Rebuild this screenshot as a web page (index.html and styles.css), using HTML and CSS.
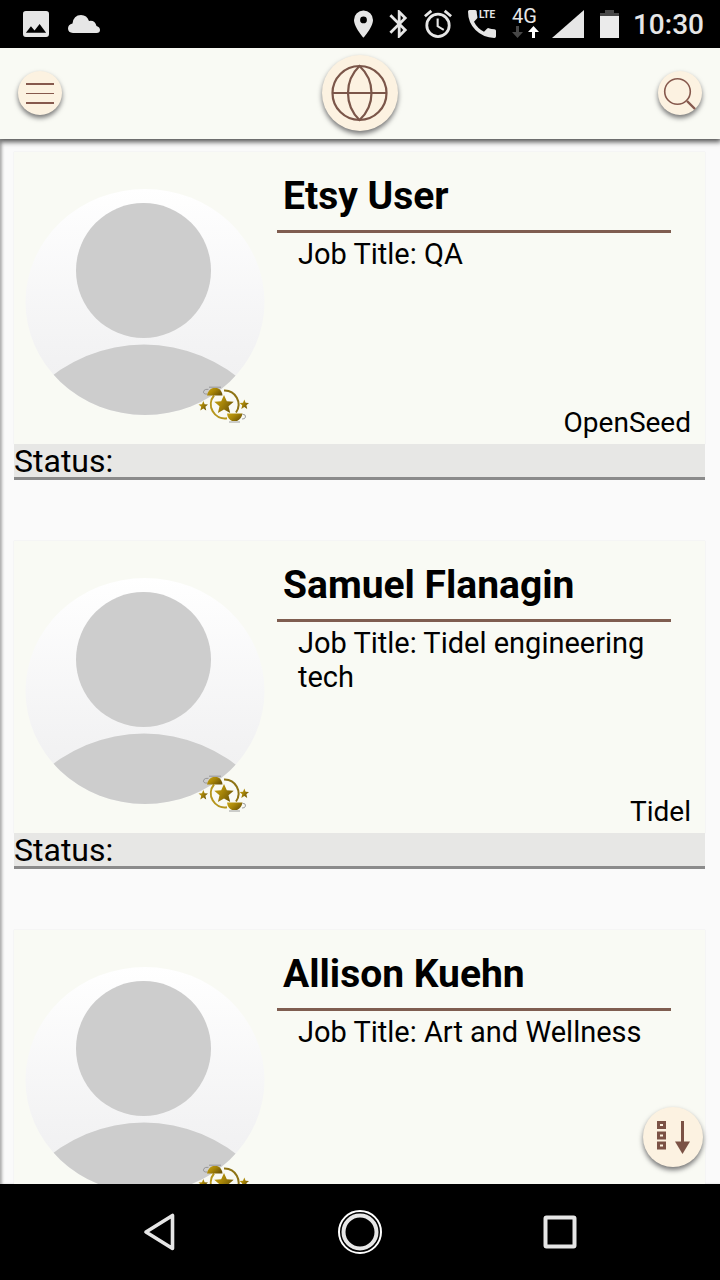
FILE: index.html
```html
<!DOCTYPE html>
<html lang="en">
<head>
<meta charset="utf-8">
<meta name="viewport" content="width=device-width, initial-scale=1">
<title>Contacts</title>
<link rel="stylesheet" href="styles.css">
</head>
<body>
<svg class="defs" aria-hidden="true">
  <defs>
    <linearGradient id="disc" x1="0" y1="0" x2="0" y2="1">
      <stop offset="0" stop-color="#ffffff"/>
      <stop offset="0.75" stop-color="#f2f2f3"/>
      <stop offset="1" stop-color="#f0f0f0"/>
    </linearGradient>
    <linearGradient id="gold" x1="0" y1="0" x2="1" y2="0.6">
      <stop offset="0" stop-color="#c9a514"/>
      <stop offset="0.5" stop-color="#a88608"/>
      <stop offset="1" stop-color="#705706"/>
    </linearGradient>
    <clipPath id="oval"><ellipse cx="131" cy="150" rx="119.500" ry="113"/></clipPath>
    <symbol id="person" viewBox="0 0 263 292">
      <ellipse cx="131" cy="150" rx="119.500" ry="113" fill="url(#disc)"/>
      <circle cx="129.500" cy="118.500" r="67.500" fill="#cdcdcd"/>
      <circle cx="130" cy="343" r="150.500" fill="#cdcdcd" clip-path="url(#oval)"/>
      <path d="M200 243.500A14 14 0 0 0 213 266.200" fill="none" stroke="#b5961d" stroke-width="2"/>
      <path d="M210 238.500A14 14 0 0 1 222 260.500" fill="none" stroke="#8e7314" stroke-width="2"/>
      <g fill="url(#gold)">
        <path d="M210 243l2.800 6.200 6.900.6-5.200 4.500 1.700 6.800-6.200-3.600-6.100 3.600 1.600-6.800-5.300-4.500 7-.6z"/>
        <path d="M189.300 249l1.300 3.200 3.400.3-2.600 2.300.8 3.600-2.900-2-3 2 .9-3.600-2.700-2.300 3.500-.3z"/>
        <path d="M230.300 247.500l1.300 3.200 3.400.3-2.600 2.300.8 3.600-2.900-2-3 2 .9-3.600-2.700-2.300 3.500-.3z"/>
        <path d="M193 243.500q1-6 6-7.500h4q5 1.700 5.500 7.500z"/>
        <path d="M213 261.500h15.500q-1 5.500-5.500 7.500h-5q-4.500-2-5-7.500z"/>
      </g>
      <path d="M195 235.200h12M215 270h11M193 242h-1.500q-3-.5-1.500-3.500 1-1.500 4.500-1.200M228 267q3 .3 3.500-2 .5-2.800-3-2.700" fill="none" stroke="#88888a" stroke-width="0.800"/>
    </symbol>
  </defs>
</svg>

<div class="phone">
  <div class="statusbar">
    <div class="status-left">
      <svg width="26" height="26" viewBox="3 3 18 18"><path fill="#e6e6e6" d="M21 19V5a2 2 0 0 0-2-2H5a2 2 0 0 0-2 2v14a2 2 0 0 0 2 2h14a2 2 0 0 0 2-2zM8.500 13.500l2.500 3 3.500-4.500 4.500 6H5l3.500-4.500z"/></svg>
      <svg width="32" height="18" viewBox="0 0 32 18"><path fill="#e6e6e6" d="M5 18Q0 17.500 0 13.500 0 9.500 4.500 8.500 5.500 0 13 0q6 0 8 6 6-1 7.500 5 3.500 1 3.500 4 0 3-3.500 3z"/></svg>
    </div>
    <div class="status-right">
      <svg width="19" height="28" viewBox="5 2 14 20"><path fill="#e6e6e6" d="M12 2a7 7 0 0 0-7 7c0 5.250 7 13 7 13s7-7.750 7-13a7 7 0 0 0-7-7zm0 9.500a2.500 2.500 0 1 1 0-5 2.500 2.500 0 0 1 0 5z"/></svg>
      <svg width="19" height="28" viewBox="5 2 13 20"><path fill="#e6e6e6" d="M17.710 7.710L12 2h-1v7.590L6.410 5 5 6.410 10.590 12 5 17.590 6.410 19 11 14.410V22h1l5.710-5.710L13.410 12zM13 5.830l1.880 1.880L13 9.590zm1.880 10.460L13 18.170v-3.760z"/></svg>
      <svg width="28" height="28" viewBox="2 2 20 20"><path fill="#e6e6e6" d="M22 5.720l-4.600-3.860-1.290 1.530 4.600 3.860zM7.880 3.390L6.600 1.860 2 5.710l1.290 1.530zM12.500 8H11v6l4.750 2.850.75-1.230-4-2.370zM12 4a9 9 0 1 0 0 18 9 9 0 0 0 0-18zm0 16a7 7 0 1 1 0-14 7 7 0 0 1 0 14z"/></svg>
      <svg width="28" height="28" viewBox="0 0 28 28"><path fill="#e6e6e6" d="M1.500 0h5.800q1.300 0 1.400 1.500.1 3 .7 5.500.3.900-.4 1.600L6 11.800q3.200 6.500 10 10l3.200-3.200q.6-.7 1.500-.4 2.800.9 5.700 1 1.600.1 1.600 1.500v5.500q0 1.800-1.600 1.800Q15 27.500 7.500 20T0 1.500Q0 0 1.500 0z"/><text class="lte" x="11" y="8">LTE</text></svg>
      <svg width="28" height="28" viewBox="0 0 28 28"><text class="net" x="0" y="13">4G</text><path fill="#474747" d="M4 16h3v6h4l-5.500 6L0 22h4z"/><path fill="#ffffff" d="M20 28v-6h-4l5.500-6 5.500 6h-4v6z"/></svg>
      <svg class="signal" width="32" height="28" viewBox="0 0 32 28"><path fill="#e6e6e6" d="M0 28L32 0v28z"/></svg>
      <svg width="19" height="28" viewBox="0 0 19 28"><path fill="#474747" d="M5 0h9v3h5v3H0V3h5z"/><path fill="#ebebeb" d="M0 6h19v22H0z"/></svg>
      <span class="clock">10:30</span>
    </div>
  </div>

  <header class="topbar">
    <button class="round" aria-label="Menu"><svg width="44" height="44" viewBox="0 0 44 44"><path stroke="#86594d" stroke-width="2" d="M8 13h28M8 32h28"/><path stroke="#86594d" d="M8 22.500h28"/></svg></button>
    <button class="round" aria-label="World"><svg width="76" height="76" viewBox="0 0 76 76"><g fill="none" stroke="#7b5649" stroke-width="2.200"><circle cx="37.500" cy="38" r="27"/><path d="M10 38h55M37.500 11Q26 22 26 38t11.500 27Q49.500 54 49.500 38T37.500 11z"/></g></svg></button>
    <button class="round" aria-label="Search"><svg width="44" height="44" viewBox="0 0 44 44"><circle cx="19.500" cy="20.500" r="12.800" fill="none" stroke="#86594d" stroke-width="1.600"/><path d="M29 30l8 8" stroke="#86594d" stroke-width="2.400"/></svg></button>
  </header>

  <main class="content">
    <div class="list">
      <article class="card">
        <div class="card-body">
          <svg class="avatar" width="263" height="292"><use href="#person"/></svg>
          <div class="details">
            <h2>Etsy User</h2>
            <p class="job">Job Title: QA</p>
            <p class="company">OpenSeed</p>
          </div>
        </div>
        <p class="state">Status:</p>
      </article>
      <article class="card">
        <div class="card-body">
          <svg class="avatar" width="263" height="292"><use href="#person"/></svg>
          <div class="details">
            <h2>Samuel Flanagin</h2>
            <p class="job">Job Title: Tidel engineering tech</p>
            <p class="company">Tidel</p>
          </div>
        </div>
        <p class="state">Status:</p>
      </article>
      <article class="card">
        <div class="card-body">
          <svg class="avatar" width="263" height="292"><use href="#person"/></svg>
          <div class="details">
            <h2>Allison Kuehn</h2>
            <p class="job">Job Title: Art and Wellness</p>
          </div>
        </div>
      </article>
    </div>
    <button class="round sort" aria-label="Sort"><svg width="60" height="60" viewBox="0 0 60 60"><g fill="none" stroke="#7b5245" stroke-width="3"><path d="M15.500 15.500h6v5h-6zM15.500 26h6v5h-6zM15.500 36h6v5h-6zM39.500 14v22"/></g><path fill="#7b5245" d="M32 34.500h15L39.500 47z"/></svg></button>
  </main>

  <nav class="navbar">
    <button aria-label="Back"><svg width="44" height="44" viewBox="0 0 44 44"><path fill="none" stroke="#e6e6e6" stroke-width="3.600" stroke-linejoin="round" d="M8 22L34.500 5.500v33z"/></svg></button>
    <button aria-label="Home"><svg width="44" height="44" viewBox="0 0 44 44"><circle cx="22" cy="22" r="21" fill="none" stroke="#ffffff" stroke-width="2"/><circle cx="22" cy="22" r="16.500" fill="none" stroke="#e6e6e6" stroke-width="4"/></svg></button>
    <button aria-label="Recent apps"><svg width="44" height="44" viewBox="0 0 44 44"><rect x="7.500" y="7.500" width="29" height="29" rx="1" fill="none" stroke="#e6e6e6" stroke-width="4"/></svg></button>
  </nav>
</div>
</body>
</html>
```
FILE: styles.css
```css
* {
  box-sizing: border-box;
}

body {
  margin: 0;
  font-family: Roboto, "Liberation Sans", sans-serif;
  color: #000;
}

h2,
p {
  margin: 0;
}

svg {
  display: block;
  overflow: visible;
}

button {
  padding: 0;
  border: 0;
  background: none;
}

.defs {
  position: absolute;
  width: 0;
  height: 0;
}

.phone {
  display: flex;
  flex-direction: column;
  height: 100vh;
  overflow: hidden;
  background: #fafafa;
}

.statusbar {
  display: flex;
  justify-content: space-between;
  align-items: center;
  flex: none;
  height: 48px;
  padding: 0 16px 0 23px;
  background: #000;
}

.status-left {
  display: flex;
  align-items: center;
  gap: 19px;
}

.status-right {
  display: flex;
  align-items: center;
  gap: 16px;
}

.signal {
  margin-left: -4px;
}

.clock {
  margin-left: -2px;
  padding-top: 2px;
  color: #e6e6e6;
  font-size: 28px;
  font-weight: 500;
  line-height: 50px;
}

.lte {
  font-size: 10px;
  font-weight: 700;
  fill: #e6e6e6;
}

.net {
  font-size: 20px;
  font-weight: 400;
  fill: #e6e6e6;
}

.topbar {
  position: relative;
  z-index: 1;
  display: flex;
  justify-content: space-between;
  align-items: center;
  flex: none;
  height: 91px;
  padding: 0 18px 1px;
  background: #f9faf4;
  box-shadow: 0 2px 5px 1px #555;
  clip-path: inset(0 0 -12px 0);
}

.round {
  border-radius: 50%;
  background: #fcf2e1;
  box-shadow: 0 3px 5px #777;
}

.content {
  position: relative;
  flex: 1;
  min-height: 0;
  overflow: hidden;
  box-shadow: inset 3px 0 3px -1px #aaa;
}

.list {
  display: flex;
  flex-direction: column;
  gap: 61px;
  padding: 13px 15px 0 14px;
}

.card-body {
  display: flex;
  height: 292px;
  background: #f9faf4;
  box-shadow: 0 0 1px #ddd;
}

.avatar {
  flex: none;
}

.details {
  display: flex;
  flex: 1;
  flex-direction: column;
  padding: 10px 14px 4px 0;
}

.details h2 {
  margin-right: 20px;
  padding: 0 6px;
  border-bottom: 3px solid #7f5d50;
  font-size: 39px;
  line-height: 68px;
}

.job,
.company {
  font-size: 29px;
  line-height: 34px;
}

.job {
  padding: 4px 20px 0 21px;
}

.company {
  margin-top: auto;
  font-size: 28px;
  text-align: right;
}

.state {
  padding-top: 1px;
  border-bottom: 3px solid #8b8b8b;
  background: #e7e7e5;
  font-size: 32px;
  line-height: 32px;
}

.sort {
  position: absolute;
  right: 17px;
  bottom: 17px;
}

.navbar {
  display: grid;
  grid-template-columns: repeat(3, 1fr);
  justify-items: center;
  align-items: center;
  flex: none;
  height: 96px;
  padding: 0 60px;
  background: #000;
}
```
